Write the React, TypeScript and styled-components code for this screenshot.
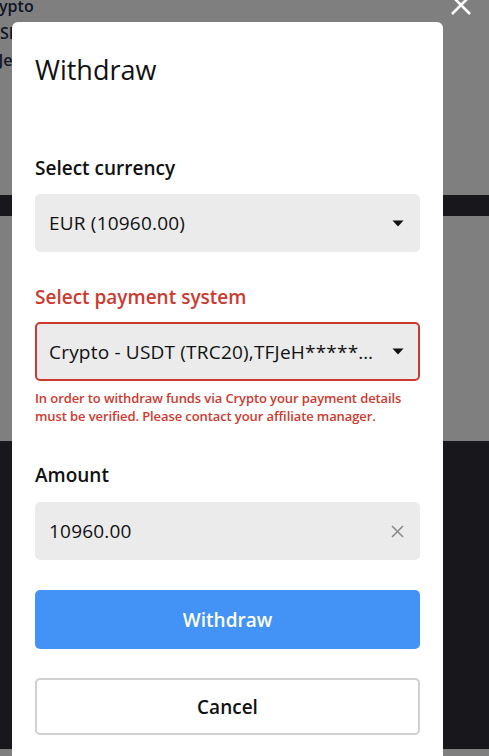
import React from 'react'
import styled, { createGlobalStyle } from 'styled-components'

const GlobalStyle = createGlobalStyle`
  html, body {
    margin: 0;
    padding: 0;
    height: 100%;
    overflow: hidden;
  }
  body {
    font-family: 'Open Sans', Lato, sans-serif;
    background: #7f7f7f;
  }
  * { box-sizing: border-box; }
`

const COLORS = {
  dim: '#7f7f7f',
  dark: '#18171c',
  field: '#ebebeb',
  red: '#cc3a2f',
  blue: '#4293f5',
  border: '#d0d0d0',
  text: '#111111',
}

const Page = styled.div`
  position: relative;
  width: 489px;
  height: 756px;
  overflow: hidden;
  display: flex;
  flex-direction: column;
`

const Band = styled.div<{ h: number; tone: 'dim' | 'dark' }>`
  flex: 0 0 ${({ h }) => h}px;
  background: ${({ tone }) => COLORS[tone]};
`

const BackCard = styled.div`
  flex: 0 0 202px;
  background: ${COLORS.dim};
  margin-left: -18px;
  padding-top: 0;
  margin-top: -7px;
`

const BackLine = styled.div<{ shift?: number }>`
  margin-left: ${({ shift = 0 }) => shift}px;
  font-size: 16px;
  font-weight: 600;
  line-height: 27px;
  color: #0f1426;
`

const CloseButton = styled.button`
  position: absolute;
  top: -6px;
  right: 17px;
  width: 22px;
  height: 22px;
  padding: 0;
  border: none;
  background: transparent;
`

const Modal = styled.div`
  position: absolute;
  left: 12px;
  top: 22px;
  width: 431px;
  height: 760px;
  background: #fff;
  border-radius: 6px;
  padding: 32px 23px 0;
  display: flex;
  flex-direction: column;
`

const Title = styled.h2`
  margin: 0;
  font-size: 27px;
  font-weight: 400;
  line-height: 31px;
  color: ${COLORS.text};
`

const Label = styled.div<{ error?: boolean; mt: number }>`
  margin-top: ${({ mt }) => mt}px;
  font-size: 19px;
  font-weight: 600;
  line-height: 22px;
  color: ${({ error }) => (error ? COLORS.red : COLORS.text)};
`

const Field = styled.div<{ error?: boolean; mt: number }>`
  margin-top: ${({ mt }) => mt}px;
  height: ${({ error }) => (error ? 59 : 58)}px;
  background: ${COLORS.field};
  border: 2px solid ${({ error }) => (error ? COLORS.red : COLORS.field)};
  border-radius: 5px;
  padding: 0 14px 0 12px;
  display: flex;
  align-items: center;
  gap: 4px;
`

const FieldText = styled.span`
  flex: 1;
  min-width: 0;
  font-size: 19px;
  letter-spacing: 0.2px;
  color: ${COLORS.text};
  white-space: nowrap;
  overflow: hidden;
  text-overflow: ellipsis;
`

const ErrorText = styled.p`
  margin: 8px 0 0;
  font-size: 13px;
  font-weight: 600;
  line-height: 18px;
  letter-spacing: -0.1px;
  color: ${COLORS.red};
`

const Button = styled.button<{ variant: 'primary' | 'outline'; mt: number }>`
  margin-top: ${({ mt }) => mt}px;
  height: ${({ variant }) => (variant === 'primary' ? 59 : 57)}px;
  width: 100%;
  border-radius: 5px;
  font-family: inherit;
  font-size: 19px;
  font-weight: 600;
  cursor: pointer;
  background: ${({ variant }) => (variant === 'primary' ? COLORS.blue : '#fff')};
  color: ${({ variant }) => (variant === 'primary' ? '#fff' : COLORS.text)};
  border: ${({ variant }) => (variant === 'primary' ? 'none' : `2px solid ${COLORS.border}`)};
`

const Caret = () => (
  <svg width="12" height="7" viewBox="0 0 12 7">
    <path d="M0.5 0.5h11L6 6.5z" fill="#111" />
  </svg>
)

const ClearIcon = () => (
  <svg width="13" height="13" viewBox="0 0 13 13">
    <path d="M1 1l11 11M12 1L1 12" stroke="#8a8a8a" strokeWidth="1.6" />
  </svg>
)

const App: React.FC = () => {
  return (
    <Page>
      <GlobalStyle />
      <BackCard>
        <BackLine>Crypto</BackLine>
        <BackLine shift={6}>USDT</BackLine>
        <BackLine shift={-1}>TFJeH</BackLine>
      </BackCard>
      <Band h={21} tone="dark" />
      <Band h={225} tone="dim" />
      <Band h={308} tone="dark" />

      <CloseButton aria-label="close">
        <svg width="22" height="22" viewBox="0 0 22 22">
          <path d="M2 2l18 18M20 2L2 20" stroke="#fff" strokeWidth="2.6" />
        </svg>
      </CloseButton>

      <Modal>
        <Title>Withdraw</Title>

        <Label mt={72}>Select currency</Label>
        <Field mt={15}>
          <FieldText>EUR (10960.00)</FieldText>
          <Caret />
        </Field>

        <Label mt={34} error>
          Select payment system
        </Label>
        <Field mt={14} error>
          <FieldText>Crypto - USDT (TRC20),TFJeH*****WmXqPz</FieldText>
          <Caret />
        </Field>
        <ErrorText>
          In order to withdraw funds via Crypto your payment details must be verified. Please contact your affiliate
          manager.
        </ErrorText>

        <Label mt={39}>Amount</Label>
        <Field mt={16}>
          <FieldText>10960.00</FieldText>
          <ClearIcon />
        </Field>

        <Button variant="primary" mt={30}>
          Withdraw
        </Button>
        <Button variant="outline" mt={29}>
          Cancel
        </Button>
      </Modal>
    </Page>
  )
}

export default App
